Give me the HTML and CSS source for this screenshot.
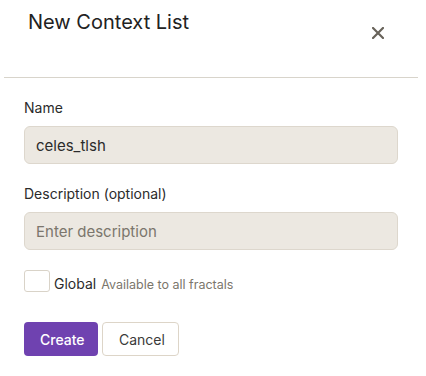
FILE: index.html
```html
<!DOCTYPE html>
<html lang="en">
<head>
    <meta charset="UTF-8">
    <meta name="viewport" content="width=device-width, initial-scale=1.0">
    <title>New Context List</title>
    <link rel="stylesheet" href="styles.css">
</head>

<body>
    <div class="modal">
        <div class="modal-header">
            <h1>New Context List</h1>
            <button type="button" class="close-button" aria-label="Close">
                <svg width="12" height="12" viewBox="0 0 12 12">
                    <path d="M1 1 L11 11 M11 1 L1 11" stroke="#68635a" stroke-width="2.2" stroke-linecap="square"/>
                </svg>
            </button>
        </div>
        <form class="modal-body">
            <div class="form-group">
                <label for="listName">Name</label>
                <input type="text" id="listName" value="celes_tlsh">
            </div>
            <div class="form-group">
                <label for="listDescription">Description (optional)</label>
                <input type="text" id="listDescription" placeholder="Enter description">
            </div>
            <div class="check-row">
                <input type="checkbox" id="global" class="checkbox">
                <label for="global" class="check-label">Global</label>
                <span class="check-hint">Available to all fractals</span>
            </div>
            <div class="actions">
                <button type="submit" class="btn btn-primary">Create</button>
                <button type="button" class="btn btn-secondary">Cancel</button>
            </div>
        </form>
    </div>
</body>
</html>
```

FILE: styles.css
```css
* {
    margin: 0;
    padding: 0;
    box-sizing: border-box;
}

body {
    font-family: 'Inter', 'Noto Sans', sans-serif;
    background-color: #ffffff;
    color: #2b2b2b;
}

.modal {
    width: 426px;
}

.modal-header {
    display: flex;
    justify-content: space-between;
    align-items: flex-start;
    height: 78px;
    margin: 0 8px 0 4px;
    padding: 8px 28px 0 24px;
    border-bottom: 1px solid #d8d4cb;
}

.modal-header h1 {
    font-size: 20px;
    font-weight: 400;
    line-height: 28px;
    color: #222222;
}

.close-button {
    margin-top: 13px;
    width: 24px;
    height: 24px;
    display: flex;
    align-items: center;
    justify-content: center;
    background: none;
    border: none;
    cursor: pointer;
}

.modal-body {
    padding: 20px 28px 0 24px;
}

.form-group {
    margin-bottom: 20px;
}

.form-group label {
    display: block;
    margin-bottom: 8px;
    font-size: 14px;
    line-height: 20px;
    color: #2b2b2b;
}

.form-group input {
    width: 100%;
    height: 38px;
    padding: 0 11px;
    font-family: inherit;
    font-size: 15px;
    color: #2b2b2b;
    background-color: #ece8e1;
    border: 1px solid #ddd7cd;
    border-radius: 6px;
    outline: none;
}

.form-group input::placeholder {
    color: #7b766c;
}

.check-row {
    display: flex;
    align-items: flex-end;
    margin-top: 0;
}

.checkbox {
    appearance: none;
    width: 26px;
    height: 22px;
    border: 1px solid #d9d3c8;
    border-radius: 3px;
    background-color: #ffffff;
}

.check-label {
    margin-left: 4px;
    font-size: 14px;
    line-height: 16px;
    color: #2b2b2b;
}

.check-hint {
    margin-left: 5px;
    font-size: 12.5px;
    line-height: 15px;
    color: #7b766c;
}

.actions {
    display: flex;
    gap: 4px;
    margin-top: 30px;
}

.btn {
    height: 34px;
    padding: 0 16px;
    font-family: inherit;
    font-size: 14px;
    border-radius: 4px;
    cursor: pointer;
}

.btn-primary {
    width: 74px;
    background-color: #6f42b0;
    border: none;
    color: #ffffff;
    font-weight: 500;
}

.btn-secondary {
    width: 77px;
    background-color: #ffffff;
    border: 1px solid #ddd5c8;
    color: #3a3a3a;
}
```
